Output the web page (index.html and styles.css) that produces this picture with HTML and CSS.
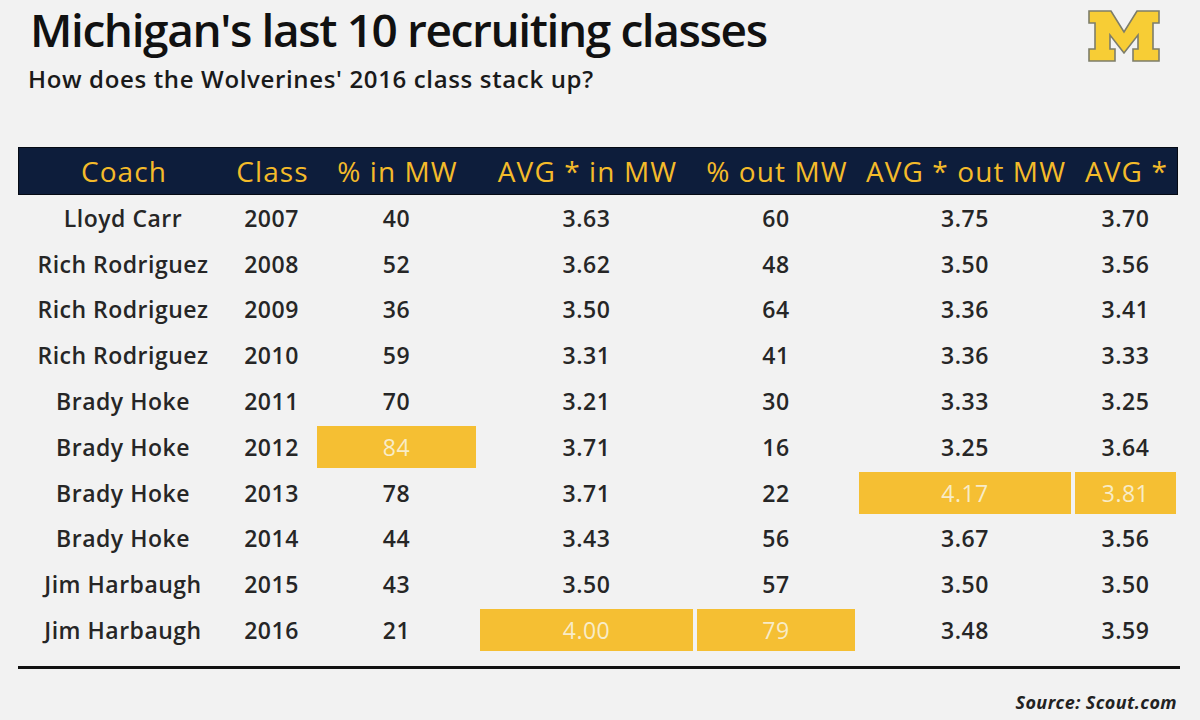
FILE: index.html
```html
<!DOCTYPE html>
<html>
<head>
<meta charset="utf-8">
<link rel="stylesheet" href="styles.css">
</head>
<body>
<div class="page">
  <header class="top">
    <div class="titles">
      <h1 class="title">Michigan's last 10 recruiting classes</h1>
      <p class="subtitle">How does the Wolverines' 2016 class stack up?</p>
    </div>
    <svg class="logo" viewBox="0 0 72 52" width="72" height="52">
      <polygon points="1,1 23,1 36,22 49,1 71,1 71,13 65,13 65,39 71,39 71,51 45,51 45,39 50,39 50,25 36,43 22,25 22,39 27,39 27,51 1,51 1,39 7,39 7,13 1,13" fill="#f7cd35" stroke="#7d7d6a" stroke-width="1.6" stroke-linejoin="miter"/>
    </svg>
  </header>

  <div class="table">
    <div class="row head">
      <div class="c">Coach</div><div class="c">Class</div><div class="c">% in MW</div><div class="c">AVG * in MW</div><div class="c">% out MW</div><div class="c">AVG * out MW</div><div class="c">AVG *</div>
    </div>
    <div class="row"><div class="c">Lloyd Carr</div><div class="c">2007</div><div class="c">40</div><div class="c">3.63</div><div class="c">60</div><div class="c">3.75</div><div class="c">3.70</div></div>
    <div class="row"><div class="c">Rich Rodriguez</div><div class="c">2008</div><div class="c">52</div><div class="c">3.62</div><div class="c">48</div><div class="c">3.50</div><div class="c">3.56</div></div>
    <div class="row"><div class="c">Rich Rodriguez</div><div class="c">2009</div><div class="c">36</div><div class="c">3.50</div><div class="c">64</div><div class="c">3.36</div><div class="c">3.41</div></div>
    <div class="row"><div class="c">Rich Rodriguez</div><div class="c">2010</div><div class="c">59</div><div class="c">3.31</div><div class="c">41</div><div class="c">3.36</div><div class="c">3.33</div></div>
    <div class="row"><div class="c">Brady Hoke</div><div class="c">2011</div><div class="c">70</div><div class="c">3.21</div><div class="c">30</div><div class="c">3.33</div><div class="c">3.25</div></div>
    <div class="row"><div class="c">Brady Hoke</div><div class="c">2012</div><div class="c hl">84</div><div class="c">3.71</div><div class="c">16</div><div class="c">3.25</div><div class="c">3.64</div></div>
    <div class="row"><div class="c">Brady Hoke</div><div class="c">2013</div><div class="c">78</div><div class="c">3.71</div><div class="c">22</div><div class="c hl">4.17</div><div class="c hl">3.81</div></div>
    <div class="row"><div class="c">Brady Hoke</div><div class="c">2014</div><div class="c">44</div><div class="c">3.43</div><div class="c">56</div><div class="c">3.67</div><div class="c">3.56</div></div>
    <div class="row"><div class="c">Jim Harbaugh</div><div class="c">2015</div><div class="c">43</div><div class="c">3.50</div><div class="c">57</div><div class="c">3.50</div><div class="c">3.50</div></div>
    <div class="row"><div class="c">Jim Harbaugh</div><div class="c">2016</div><div class="c">21</div><div class="c hl">4.00</div><div class="c hl">79</div><div class="c">3.48</div><div class="c">3.59</div></div>
  </div>

  <div class="rule"></div>
  <p class="source">Source: Scout.com</p>
</div>
</body>
</html>
```

FILE: styles.css
```css
html, body {
  margin: 0;
  padding: 0;
  background: #f2f2f2;
}
body {
  width: 1200px;
  height: 720px;
  overflow: hidden;
  font-family: "Open Sans", "Noto Sans", sans-serif;
  color: #1e1e1e;
}
.page {
  padding: 0 20px 0 18px;
}
.top {
  display: flex;
  justify-content: space-between;
  align-items: flex-start;
  height: 147px;
}
.titles {
  padding-left: 12px;
  padding-top: 1px;
}
.title {
  margin: 0;
  font-size: 46px;
  font-weight: 600;
  line-height: 56px;
  color: #111;
  letter-spacing: -1.4px;
}
.subtitle {
  margin: 6px 0 0 -2px;
  font-size: 24px;
  line-height: 32px;
  font-weight: 600;
  color: #1a1a1a;
  letter-spacing: 0.65px;
}
.logo {
  margin-top: 10px;
  margin-right: 20px;
}
.table {
  width: 1160px;
}
.row {
  display: grid;
  grid-template-columns: 210px 87px 163px 217px 162px 216px 105px;
  height: 45.8px;
}
.row .c {
  display: flex;
  align-items: center;
  justify-content: center;
  font-size: 23px;
  font-weight: 600;
  letter-spacing: 0.5px;
  white-space: nowrap;
  color: #262626;
}
.row.head {
  height: 48px;
  background: #0d1d3b;
  box-sizing: border-box;
  border: 1.5px solid #050a14;
}
.row.head .c {
  color: #f4bb2a;
  font-size: 28px;
  font-weight: 500;
  letter-spacing: 1.1px;
}
.row .c.hl {
  background: #f5bf33;
  color: #f8ecc8;
  font-weight: 500;
  box-shadow: inset 0 0 0 2px #f2f2f2;
}
.rule {
  width: 1162px;
  height: 3px;
  background: #111;
  margin-top: 13px;
}
.source {
  margin: 21px 0 0 0;
  text-align: right;
  font-size: 18px;
  font-weight: 700;
  font-style: italic;
  color: #222;
  letter-spacing: 0.4px;
  padding-right: 3px;
}
```
